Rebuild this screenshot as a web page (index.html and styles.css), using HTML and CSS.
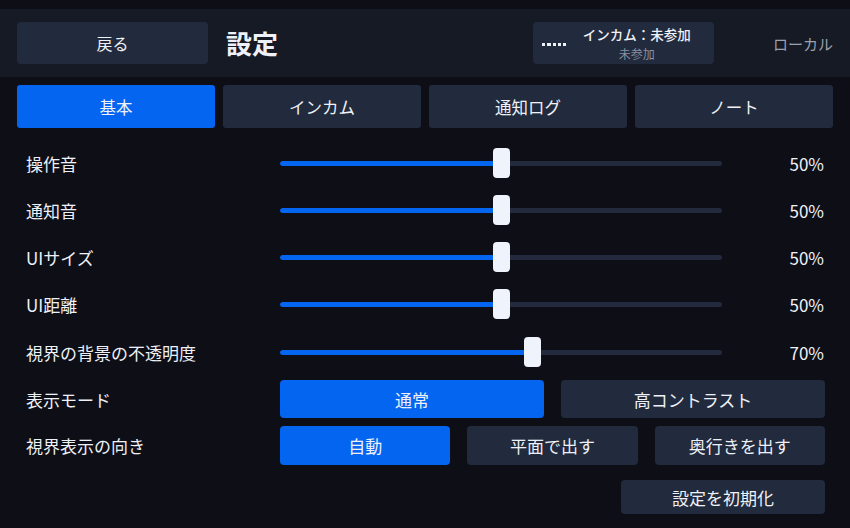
FILE: index.html
```html
<!DOCTYPE html>
<html lang="ja">
<head>
<meta charset="utf-8">
<title>設定</title>
<link rel="stylesheet" href="styles.css">
</head>
<body>
<header class="header">
  <button class="btn back">戻る</button>
  <h1 class="title">設定</h1>
  <div class="intercom">
    <span class="signal" aria-hidden="true"><i></i><i></i><i></i><i></i><i></i></span>
    <div class="intercom-text">
      <div class="ic-main">インカム：未参加</div>
      <div class="ic-sub">未参加</div>
    </div>
  </div>
  <div class="local">ローカル</div>
</header>

<nav class="tabs">
  <button class="tab active">基本</button>
  <button class="tab">インカム</button>
  <button class="tab">通知ログ</button>
  <button class="tab">ノート</button>
</nav>

<main class="settings">
  <div class="sliders">
    <div class="row">
      <div class="label">操作音</div>
      <div class="slider"><div class="track"><div class="fill" style="width:50%"></div></div><div class="thumb" style="left:50%"></div></div>
      <div class="value">50%</div>
    </div>
    <div class="row">
      <div class="label">通知音</div>
      <div class="slider"><div class="track"><div class="fill" style="width:50%"></div></div><div class="thumb" style="left:50%"></div></div>
      <div class="value">50%</div>
    </div>
    <div class="row">
      <div class="label">UIサイズ</div>
      <div class="slider"><div class="track"><div class="fill" style="width:50%"></div></div><div class="thumb" style="left:50%"></div></div>
      <div class="value">50%</div>
    </div>
    <div class="row">
      <div class="label">UI距離</div>
      <div class="slider"><div class="track"><div class="fill" style="width:50%"></div></div><div class="thumb" style="left:50%"></div></div>
      <div class="value">50%</div>
    </div>
    <div class="row row-tall">
      <div class="label">視界の背景の不透明度</div>
      <div class="slider"><div class="track"><div class="fill" style="width:57.1%"></div></div><div class="thumb" style="left:57.1%"></div></div>
      <div class="value">70%</div>
    </div>
  </div>

  <div class="row choice-row mode-row">
    <div class="label">表示モード</div>
    <div class="choices two">
      <button class="btn choice active">通常</button>
      <button class="btn choice">高コントラスト</button>
    </div>
  </div>
  <div class="row choice-row orient-row">
    <div class="label">視界表示の向き</div>
    <div class="choices three">
      <button class="btn choice active">自動</button>
      <button class="btn choice">平面で出す</button>
      <button class="btn choice">奥行きを出す</button>
    </div>
  </div>
  <div class="reset-row">
    <button class="btn reset">設定を初期化</button>
  </div>
</main>
</body>
</html>
```

FILE: styles.css
```css
* { box-sizing: border-box; }

html, body {
  margin: 0;
  padding: 0;
  width: 850px;
  height: 528px;
  overflow: hidden;
  background: #0d0e16;
  color: #eef1f7;
  font-family: "Noto Sans CJK JP", "Noto Sans", sans-serif;
}

body { padding-top: 9px; }

button {
  font-family: inherit;
  color: inherit;
  border: 0;
  margin: 0;
  cursor: pointer;
}

.btn {
  background: #222a3d;
  border-radius: 4px;
  font-size: 17px;
}

/* header */
.header {
  display: flex;
  align-items: center;
  height: 68px;
  padding: 0 17px;
  background: #161a24;
}

.back {
  width: 191px;
  height: 42px;
  font-size: 16px;
}

.title {
  margin: 0 0 0 18px;
  font-size: 26px;
  font-weight: 700;
  line-height: 1;
}

.intercom {
  margin-left: auto;
  width: 181px;
  height: 42px;
  display: flex;
  align-items: center;
  padding: 1px 10px 0 9px;
  background: #222a3d;
  border-radius: 4px;
}

.signal {
  display: flex;
  gap: 2px;
  margin-top: 1px;
}
.signal i {
  display: block;
  width: 3.3px;
  height: 3px;
  background: #eef1f7;
}

.intercom-text {
  flex: 1;
  margin-left: 3px;
  text-align: center;
  line-height: 19px;
}
.ic-main {
  font-size: 13.5px;
  font-weight: 500;
}
.ic-sub {
  font-size: 12px;
  color: #8a91a3;
}

.local {
  margin-left: 59px;
  font-size: 15px;
  color: #9aa1b1;
}

/* tabs */
.tabs {
  display: grid;
  grid-template-columns: repeat(4, 1fr);
  gap: 8px;
  padding: 0 17px;
  margin-top: 8px;
}
.tab {
  height: 43px;
  background: #222a3d;
  border-radius: 3px;
  font-size: 16.5px;
}
.tab.active { background: #0465f0; }

/* settings */
.settings {
  padding: 20px 25px 0 26px;
}

.sliders {
  display: flex;
  flex-direction: column;
  gap: 17px;
}

.row {
  display: flex;
  align-items: center;
  height: 30px;
}
.row-tall { margin-top: 1px; }

.label {
  width: 254px;
  flex: none;
  font-size: 17px;
  line-height: 1;
}

.slider {
  position: relative;
  width: 442px;
  height: 30px;
  flex: none;
  display: flex;
  align-items: center;
}
.track {
  width: 100%;
  height: 5px;
  border-radius: 3px;
  background: #232a3d;
  overflow: hidden;
}
.fill {
  height: 100%;
  background: #0465f0;
  border-radius: 3px 0 0 3px;
}
.thumb {
  position: absolute;
  top: 0;
  width: 17px;
  height: 30px;
  margin-left: -8.5px;
  background: #eef3fc;
  border-radius: 4px;
}

.value {
  flex: 1;
  text-align: right;
  font-size: 17px;
  line-height: 1;
  padding-right: 1px;
}

.choice-row { height: auto; }
.mode-row { margin-top: 13px; }
.orient-row { margin-top: 8px; }

.choices {
  flex: 1;
  display: grid;
  gap: 17px;
}
.choices.two { grid-template-columns: repeat(2, 1fr); }
.choices.three { grid-template-columns: repeat(3, 1fr); }

.mode-row .choice { height: 38px; }
.orient-row .choice { height: 39px; }

.choice.active { background: #0465f0; }

.reset-row {
  display: flex;
  justify-content: flex-end;
  margin-top: 15px;
}
.reset {
  width: 204px;
  height: 34px;
}
```
